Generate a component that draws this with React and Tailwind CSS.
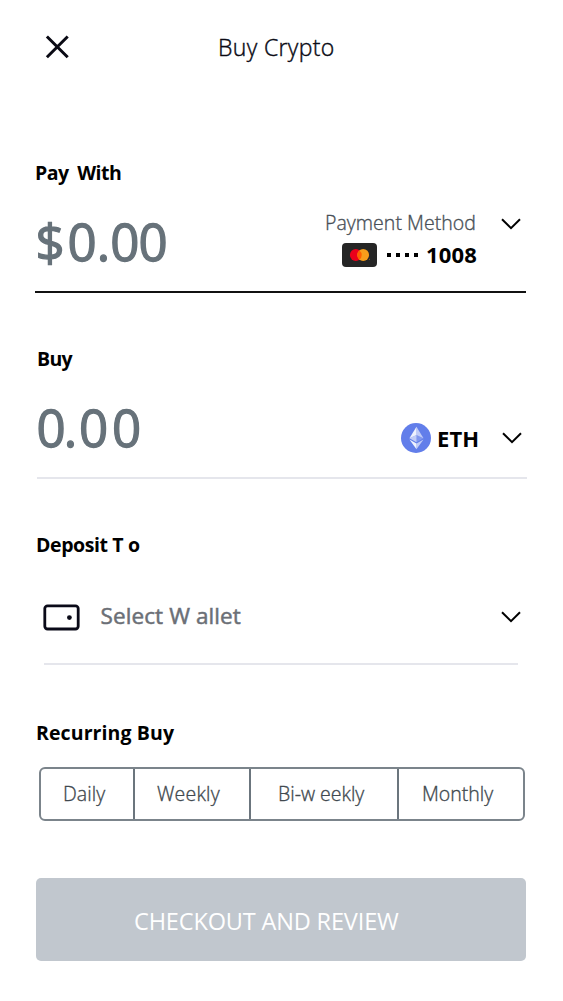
import clsx from "clsx";

const CloseIcon = () => (
  <svg width="24" height="24" viewBox="0 0 24 24" fill="none">
    <path d="M1.9 1.5 L22.7 22.3 M22.7 1.5 L1.9 22.3" stroke="#0a0a14" strokeWidth="3" />
  </svg>
);

const ChevronDown = () => (
  <svg width="20" height="12" viewBox="0 0 20 12" fill="none">
    <path d="M1 1.2 L10 10.2 L19 1.2" stroke="#000" strokeWidth="2" />
  </svg>
);

const WalletIcon = () => (
  <svg width="37" height="27" viewBox="0 0 37 27" fill="none">
    <rect x="1.8" y="1.8" width="33.4" height="23.2" rx="2.8" stroke="#0a0a18" strokeWidth="2.8" />
    <circle cx="26.4" cy="13.6" r="2.4" fill="#0a0a18" />
  </svg>
);

const CardIcon = () => (
  <svg width="35" height="24" viewBox="0 0 35 24">
    <rect width="35" height="24" rx="4" fill="#252525" />
    <circle cx="13.8" cy="12" r="5.9" fill="#eb001b" />
    <circle cx="21.2" cy="12" r="5.9" fill="#f79e1b" />
    <path d="M17.5 7.4 A5.9 5.9 0 0 1 17.5 16.6 A5.9 5.9 0 0 1 17.5 7.4" fill="#ff5f00" />
    <circle cx="27.4" cy="16.2" r="0.5" fill="#b87a20" />
  </svg>
);

const EthIcon = () => (
  <svg width="30" height="30" viewBox="0 0 32 32">
    <circle cx="16" cy="16" r="16" fill="#627eea" />
    <g fill="#fff">
      <path fillOpacity=".6" d="M16.5 4v8.87l7.5 3.35z" />
      <path fillOpacity=".9" d="M16.5 4L9 16.22l7.5-3.35z" />
      <path fillOpacity=".6" d="M16.5 21.97v6.03L24 17.62z" />
      <path fillOpacity=".9" d="M16.5 28v-6.03L9 17.62z" />
      <path fillOpacity=".2" d="M16.5 20.57l7.5-4.35-7.5-3.35z" />
      <path fillOpacity=".6" d="M9 16.22l7.5 4.35v-7.7z" />
    </g>
  </svg>
);

const SectionTitle = ({ children, className }) => (
  <h2
    className={clsx(
      "h-6 text-[19.5px] leading-6 font-bold text-black whitespace-pre",
      className
    )}
  >
    {children}
  </h2>
);

const periods = [
  { label: "Daily", cell: "w-[94px] pl-[22px]", text: "tracking-[0.1px]" },
  { label: "Weekly", cell: "w-[116px] pl-[22px]", text: "tracking-[0.2px]" },
  { label: "Bi-w eekly", cell: "w-[148px] pl-[27px]", text: "tracking-[0px]" },
  { label: "Monthly", cell: "w-[124px] pl-[23px]", text: "tracking-[0px]" },
];

export default function App() {
  return (
    <div className="flex h-[1001px] w-[563px] flex-col bg-white pl-9 font-['Open_Sans','Noto_Sans',sans-serif]">
      <header className="flex h-[94px] items-center pl-[9px]">
        <button>
          <CloseIcon />
        </button>
        <h1 className="ml-[149px] text-[23px] leading-8 font-light tracking-[0.35px] text-[#0a0a14] whitespace-nowrap [-webkit-text-stroke:0.4px_#0a0a14]">
          Buy Crypto
        </h1>
      </header>

      <section className="mt-[66px] -ml-px flex h-[133px] w-[491px] flex-col border-b-2 border-[#111]">
        <SectionTitle className="relative top-px tracking-[-0.5px] [word-spacing:4px]">
          Pay With
        </SectionTitle>
        <div className="mt-[26px] flex justify-between">
          <p className="mt-px h-[60px] text-[51px] leading-[60px] tracking-[-0.8px] text-[#67727a] whitespace-nowrap [-webkit-text-stroke:1.3px_#67727a]">
            <span className="mr-[3.5px] ml-[0.5px]">$</span>0
            <span className="mr-[0.9px] ml-[0.9px]">.</span>00
          </p>
          <div className="flex pr-[5px]">
            <div className="flex flex-col items-end">
              <p className="h-[26px] text-[19.5px] leading-[26px] font-light tracking-[0.05px] text-[#495057] whitespace-nowrap [-webkit-text-stroke:0.35px_#495057]">
                Payment Method
              </p>
              <div className="-mr-px mt-[7px] flex h-6 items-center">
                <CardIcon />
                <div className="ml-[10px] flex gap-[5px]">
                  <i className="size-1 bg-black" />
                  <i className="size-1 bg-black" />
                  <i className="size-1 bg-black" />
                  <i className="size-1 bg-black" />
                </div>
                <span className="-mt-[2px] ml-[8.5px] text-[22px] leading-6 font-bold tracking-[0.15px] text-black">
                  1008
                </span>
              </div>
            </div>
            <button className="mt-[8px] ml-[25px] h-3">
              <ChevronDown />
            </button>
          </div>
        </div>
      </section>

      <section className="mt-[53px] ml-px flex h-[133px] w-[490px] flex-col border-b-2 border-[#e5e6ec]">
        <SectionTitle className="relative top-px tracking-[-0.7px]">Buy</SectionTitle>
        <div className="mt-[26px] flex justify-between">
          <p className="mt-px h-[60px] text-[51px] leading-[60px] text-[#67727a] whitespace-nowrap [-webkit-text-stroke:1.3px_#67727a]">
            <span className="-ml-[0.5px] tracking-[-2px]">0</span>
            <span className="tracking-[2px]">.</span>
            <span className="tracking-[3.8px]">0</span>0
          </p>
          <div className="mt-[27px] flex h-[30px] items-center pr-[5px]">
            <EthIcon />
            <span className="ml-[6px] text-[22px] leading-6 font-bold text-black">ETH</span>
            <button className="ml-[23px] h-3">
              <ChevronDown />
            </button>
          </div>
        </div>
      </section>

      <section className="mt-[54px] flex h-[132px] w-[490px] flex-col">
        <SectionTitle className="tracking-[-0.4px]">Deposit T o</SectionTitle>
        <div className="ml-2 mt-[24px] flex h-[84px] w-[474px] items-center border-b-2 border-[#e5e6ec] pb-[11px]">
          <div className="-ml-px mt-px">
            <WalletIcon />
          </div>
          <p className="-mt-[2px] ml-[20.5px] text-[22.5px] leading-8 tracking-[0.1px] text-[#6b6f76] whitespace-nowrap [-webkit-text-stroke:0.5px_#6b6f76]">
            Select W allet
          </p>
          <button className="-mr-[3px] ml-auto h-3">
            <ChevronDown />
          </button>
        </div>
      </section>

      <section className="mt-[56px]">
        <SectionTitle className="tracking-[0.1px]">Recurring Buy</SectionTitle>
        <div className="mt-[22px] ml-[3px] flex h-[54px] w-[486px] divide-x-2 divide-[#6b757d] rounded-md border-2 border-[#7b848b]">
          {periods.map((period) => (
            <button
              key={period.label}
              className={clsx(
                "flex items-center text-[19.5px] font-light text-[#41494f] whitespace-nowrap [-webkit-text-stroke:0.35px_#41494f]",
                period.cell,
                period.text
              )}
            >
              {period.label}
            </button>
          ))}
        </div>
      </section>

      <button className="mt-[57px] flex h-[83px] w-[490px] shrink-0 items-center rounded-[5px] bg-[#c1c7ce] pl-[98px] text-[23.5px] tracking-[-0.15px] text-white whitespace-nowrap">
        <span className="mt-[4px]">CHECKOUT AND REVIEW</span>
      </button>
    </div>
  );
}
